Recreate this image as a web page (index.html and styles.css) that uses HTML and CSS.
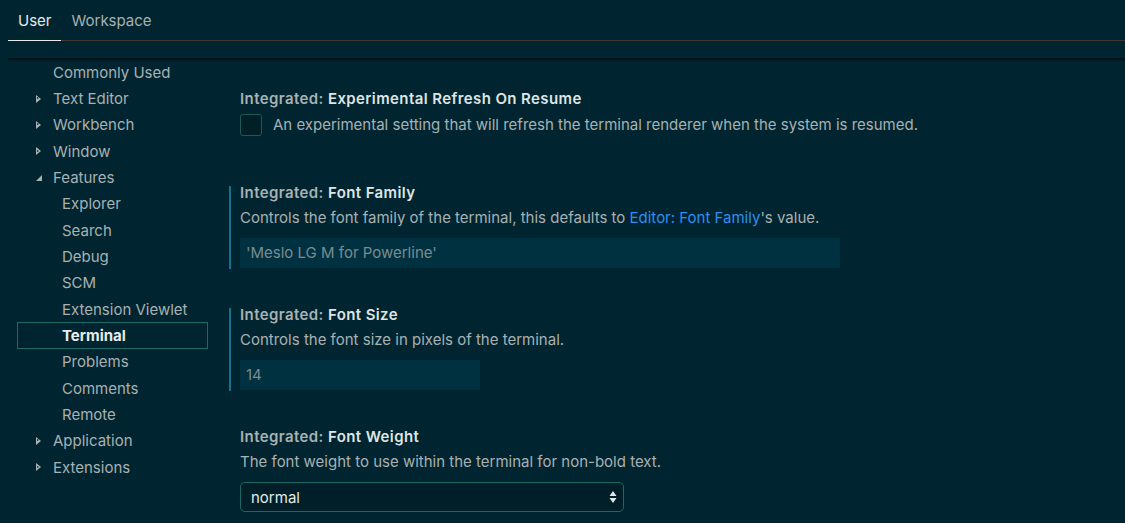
FILE: index.html
```html
<!DOCTYPE html>
<html>
<head>
<meta charset="utf-8">
<link rel="stylesheet" href="styles.css">
</head>
<body>
<div class="editor">
  <div class="tabs">
    <div class="tab active">User</div>
    <div class="tab">Workspace</div>
  </div>
  <div class="body">
    <nav class="tree">
      <div class="row top"><span class="twisty"></span>Commonly Used</div>
      <div class="row top"><span class="twisty closed"></span>Text Editor</div>
      <div class="row top"><span class="twisty closed"></span>Workbench</div>
      <div class="row top"><span class="twisty closed"></span>Window</div>
      <div class="row top"><span class="twisty open"></span>Features</div>
      <div class="row sub">Explorer</div>
      <div class="row sub">Search</div>
      <div class="row sub">Debug</div>
      <div class="row sub">SCM</div>
      <div class="row sub">Extension Viewlet</div>
      <div class="row sub selected">Terminal</div>
      <div class="row sub">Problems</div>
      <div class="row sub">Comments</div>
      <div class="row sub">Remote</div>
      <div class="row top"><span class="twisty closed"></span>Application</div>
      <div class="row top"><span class="twisty closed"></span>Extensions</div>
    </nav>
    <main class="settings">
      <section class="setting first">
        <div class="title"><span class="cat">Integrated: </span><span class="name">Experimental Refresh On Resume</span></div>
        <label class="check-row"><span class="checkbox"></span><span class="desc">An experimental setting that will refresh the terminal renderer when the system is resumed.</span></label>
      </section>
      <section class="setting modified">
        <div class="title"><span class="cat">Integrated: </span><span class="name">Font Family</span></div>
        <div class="desc">Controls the font family of the terminal, this defaults to <span class="link">Editor: Font Family</span>'s value.</div>
        <div class="input wide">'Meslo LG M for Powerline'</div>
      </section>
      <section class="setting modified">
        <div class="title"><span class="cat">Integrated: </span><span class="name">Font Size</span></div>
        <div class="desc">Controls the font size in pixels of the terminal.</div>
        <div class="input narrow">14</div>
      </section>
      <section class="setting">
        <div class="title"><span class="cat">Integrated: </span><span class="name">Font Weight</span></div>
        <div class="desc">The font weight to use within the terminal for non-bold text.</div>
        <div class="select">normal<svg class="arrows" width="8" height="14" viewBox="0 0 8 14"><path d="M4 1 L7.5 6 L0.5 6 Z M4 13 L7.5 8 L0.5 8 Z" fill="#e6e6e6"/></svg></div>
      </section>
    </main>
  </div>
</div>
</body>
</html>
```
FILE: styles.css
```css
html, body {
  margin: 0;
  padding: 0;
  background: #002530;
  overflow: hidden;
}
body {
  font-family: Inter, "Noto Sans", sans-serif;
  font-size: 15px;
  color: #a8b1b3;
  width: 1125px;
  height: 523px;
}
.tabs {
  display: flex;
  margin-left: 8px;
  height: 40px;
  border-bottom: 1px solid #3c3a36;
}
.tab {
  padding: 1px 10px 0;
  line-height: 39px;
  color: #a8b1b3;
  box-sizing: border-box;
}
.tab.active {
  color: #e6e9e9;
  border-bottom: 1px solid #e6e9e9;
  margin-bottom: -1px;
}
.body {
  margin-top: 17px;
  margin-left: 8px;
  border-top: 1px solid #001318;
  box-shadow: inset 0 3px 3px -2px rgba(0, 0, 0, 0.55);
  display: flex;
  height: 470px;
}
.tree {
  width: 191px;
  padding-left: 9px;
  padding-top: 0;
  flex: none;
}
.row {
  height: 26.35px;
  box-sizing: border-box;
  display: flex;
  align-items: center;
  white-space: nowrap;
}
.row.sub { padding-left: 45px; }
.twisty {
  width: 36px;
  height: 12px;
  flex: none;
  position: relative;
}
.twisty.closed::before {
  content: "";
  position: absolute;
  left: 19px;
  top: 2px;
  border-left: 5px solid #a8b1b3;
  border-top: 4px solid transparent;
  border-bottom: 4px solid transparent;
}
.twisty.closed::after {
  content: "";
  position: absolute;
  left: 20px;
  top: 4.5px;
  border-left: 2px solid #002530;
  border-top: 1.5px solid transparent;
  border-bottom: 1.5px solid transparent;
}
.twisty.open::before {
  content: "";
  position: absolute;
  left: 19px;
  top: 3px;
  border-right: 6px solid #a8b1b3;
  border-top: 6px solid transparent;
}
.row.selected {
  border: 1px solid #1a6b66;
  color: #e8ecec;
  font-weight: 700;
  padding-left: 44px;
}
.settings {
  flex: 1;
  padding-left: 21px;
  padding-top: 30px;
}
.setting {
  position: relative;
  padding-left: 11px;
  margin-bottom: 37px;
}
.setting.first { margin-bottom: 47px; }
.setting.modified::before {
  content: "";
  position: absolute;
  left: 0;
  top: 3px;
  bottom: -1px;
  width: 2px;
  background: #16708e;
}
.title {
  line-height: 20px;
  font-weight: 600;
  letter-spacing: 0.4px;
  color: #a8b1b3;
  white-space: nowrap;
}
.title .name { color: #dfe4e4; }
.desc {
  line-height: 20px;
  margin-top: 5px;
  white-space: nowrap;
}
.link { color: #2e8ff0; }
.check-row {
  display: flex;
  align-items: center;
  margin-top: 5px;
}
.check-row .desc { margin-top: 0; margin-left: 11px; }
.checkbox {
  width: 20px;
  height: 20px;
  border: 1px solid #1c5a56;
  border-radius: 3px;
  background: #001f27;
  flex: none;
}
.input {
  margin-top: 10px;
  height: 30px;
  line-height: 30px;
  padding: 0 6px;
  background: #003140;
  color: #7c8b8e;
  box-sizing: border-box;
}
.input.wide { width: 600px; }
.input.narrow { width: 240px; }
.select {
  margin-top: 10px;
  width: 384px;
  height: 30px;
  box-sizing: border-box;
  border: 1px solid #1d6862;
  border-radius: 5px;
  background: #001f28;
  color: #e8eaea;
  padding: 0 6px 0 10px;
  display: flex;
  align-items: center;
  justify-content: space-between;
}
.arrows { flex: none; }
```
